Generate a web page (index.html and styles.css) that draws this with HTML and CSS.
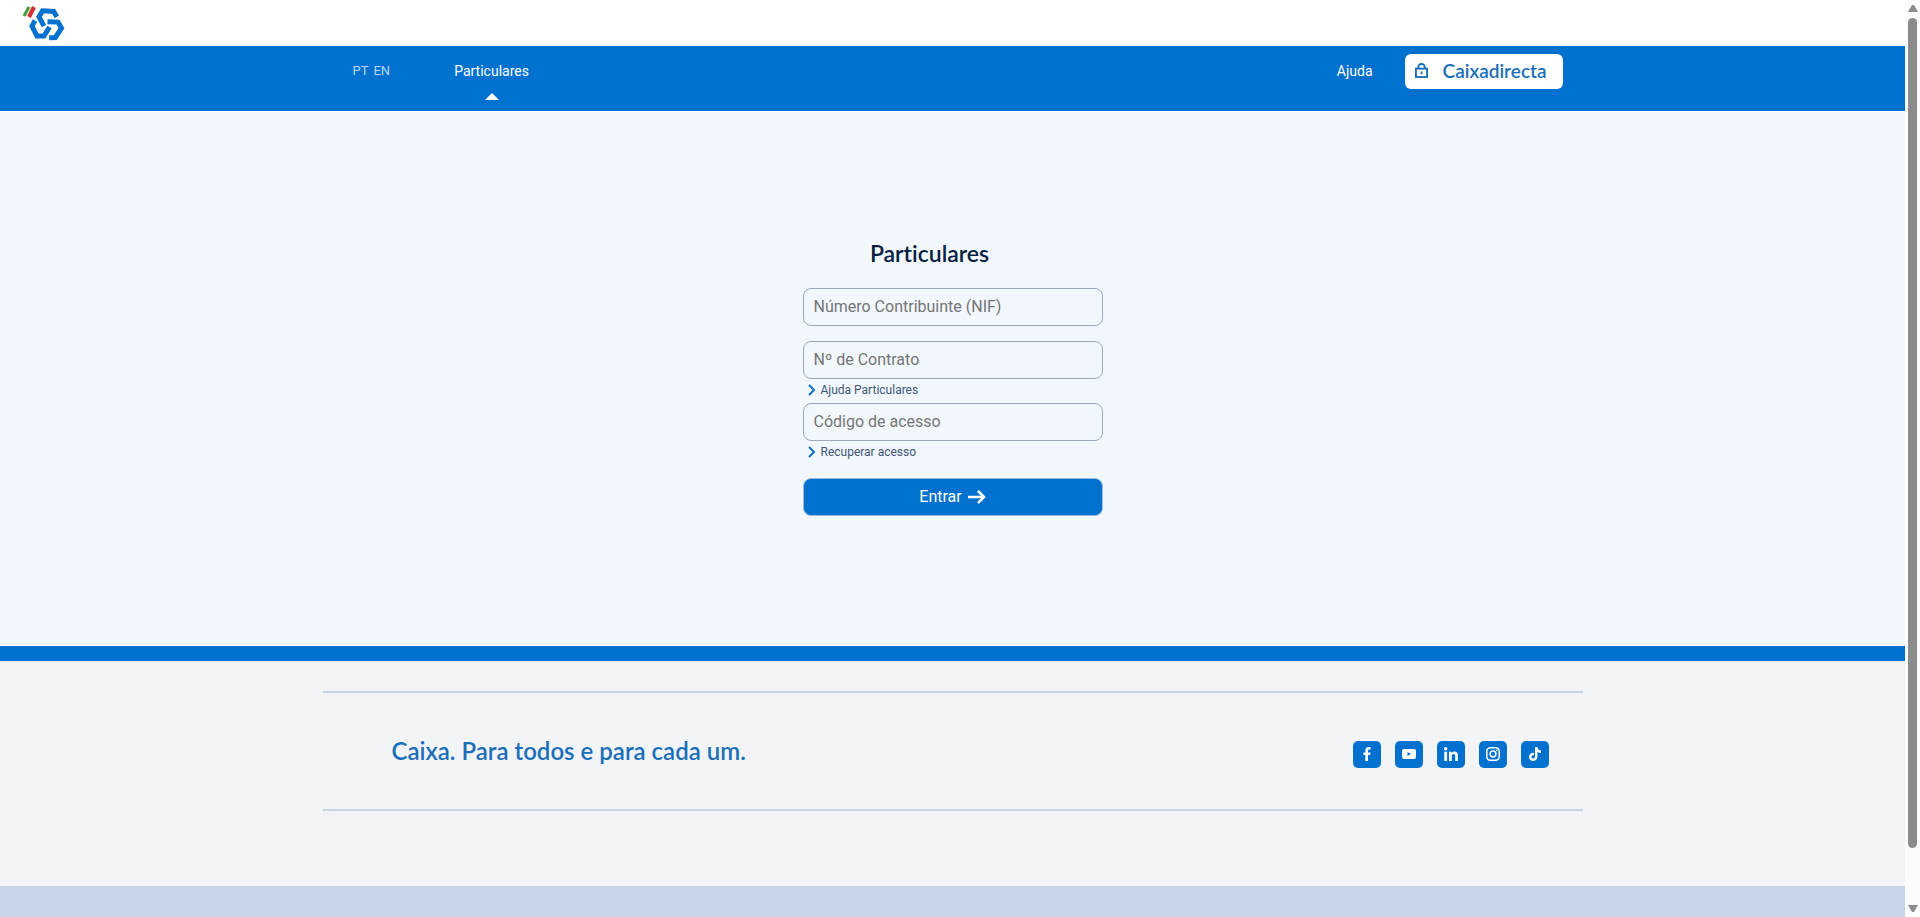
FILE: index.html
```html
<!DOCTYPE html>
<html lang="pt">
<head>
  <meta charset="UTF-8" />
  <meta name="viewport" content="width=device-width, initial-scale=1.0"/>
  <title>Caixadirecta - Particulares</title>
  <link rel="stylesheet" href="styles.css">
</head>
<body>

  <div class="page">
    <header class="header">
      <a href="#" class="logo" aria-label="Caixa">
        <svg width="44" height="38" viewBox="0 0 44 38">
          <path d="M7 3 L2 12" stroke="#3f9b3f" stroke-width="3"/>
          <path d="M9 3 L4 12" stroke="#c9d8a0" stroke-width="1"/>
          <path d="M12 3 L7 13" stroke="#d5303a" stroke-width="4"/>
          <g transform="translate(25 21)" fill="none" stroke="#0071ce" stroke-width="5">
            <path d="M-12 -4.500 L-15 1 L-10 11 H-3 L2.500 2"/>
            <path transform="rotate(120)" d="M-12 -4.500 L-15 1 L-10 11 H-3 L2.500 2"/>
            <path transform="rotate(240)" d="M-12 -4.500 L-15 1 L-10 11 H-3 L2.500 2"/>
          </g>
        </svg>
      </a>
    </header>

    <nav class="nav">
      <div class="container nav-row">
        <div class="langs">
          <a href="#">PT</a>
          <a href="#">EN</a>
        </div>
        <a href="#" class="nav-link active">Particulares</a>
        <a href="#" class="nav-link help">Ajuda</a>
        <button type="button" class="direct">
          <svg width="13" height="15" viewBox="0 0 14 16" fill="none" stroke="#1b6fb8" stroke-width="2">
            <rect x="1" y="6" width="12" height="9"/>
            <path d="M3.500 6 V4.500 A3.500 3.500 0 0 1 10.500 4.500 V6"/>
            <path d="M7 9 V12"/>
          </svg>
          Caixadirecta
        </button>
      </div>
    </nav>

    <main class="main">
      <form class="login">
        <h1>Particulares</h1>
        <input type="text" class="field nif" placeholder="Número Contribuinte (NIF)" aria-label="Número Contribuinte (NIF)">
        <input type="text" class="field" placeholder="Nº de Contrato" aria-label="Nº de Contrato">
        <a href="#" class="hint">
          <svg width="8" height="12" viewBox="0 0 8 12"><path d="M1 1 L6 6 L1 11" fill="none" stroke="#0f70bd" stroke-width="2"/></svg>
          Ajuda Particulares
        </a>
        <input type="password" class="field" placeholder="Código de acesso" aria-label="Código de acesso">
        <a href="#" class="hint">
          <svg width="8" height="12" viewBox="0 0 8 12"><path d="M1 1 L6 6 L1 11" fill="none" stroke="#0f70bd" stroke-width="2"/></svg>
          Recuperar acesso
        </a>
        <button type="submit" class="enter">
          Entrar
          <svg width="18" height="14" viewBox="0 0 18 14" fill="none" stroke="#fff" stroke-width="2.500"><path d="M0 7 H16"/><path d="M10 1 L16 7 L10 13"/></svg>
        </button>
      </form>
    </main>

    <footer class="footer">
      <div class="container claim-row">
        <p class="claim">Caixa. Para todos e para cada um.</p>
        <div class="social">
          <a href="#" aria-label="Facebook">
            <svg viewBox="0 0 14 14"><path d="M5.300 14 V8 H3.400 V5.400 H5.300 V3.700 C5.300 1.300 6.500 0 8.700 0 H10.600 V2.500 H9.300 C8.300 2.500 8 2.900 8 3.700 V5.400 H10.500 L10.200 8 H8 V14 Z"/></svg>
          </a>
          <a href="#" aria-label="YouTube">
            <svg viewBox="0 0 14 14"><path fill-rule="evenodd" d="M2 2 H12 Q14 2 14 4 V10 Q14 12 12 12 H2 Q0 12 0 10 V4 Q0 2 2 2 Z M5.500 5 V9 L9 7 Z"/></svg>
          </a>
          <a href="#" aria-label="LinkedIn">
            <svg viewBox="0 0 14 14"><circle cx="1.700" cy="1.700" r="1.700"/><path d="M0.300 4.700 H3.100 V14 H0.300 Z M5 4.700 H7.600 V6 C8.200 5 9.200 4.500 10.400 4.500 C13.100 4.500 14 6.200 14 8.800 V14 H11.200 V9.300 C11.200 8 11 6.900 9.600 6.900 C8.200 6.900 7.800 8 7.800 9.300 V14 H5 Z"/></svg>
          </a>
          <a href="#" aria-label="Instagram">
            <svg viewBox="0 0 14 14"><g fill="none" stroke="#fff" stroke-width="1.500"><rect x="0.800" y="0.800" width="12.400" height="12.400" rx="3.500"/><circle cx="7" cy="7" r="2.900"/></g><circle cx="10.700" cy="3.300" r="0.900"/></svg>
          </a>
          <a href="#" aria-label="TikTok">
            <svg viewBox="0 0 14 14"><path d="M7 0 H9.400 C9.600 2.100 10.900 3.300 13 3.500 V6 C11.600 6 10.400 5.600 9.400 4.900 V9.500 C9.400 12.400 7.400 14 5.100 14 C2.700 14 1 12.200 1 9.800 C1 7.200 3.100 5.400 6 5.700 V8.300 C4.600 8 3.500 8.600 3.500 9.800 C3.500 10.800 4.200 11.500 5.200 11.500 C6.300 11.500 7 10.700 7 9.500 Z"/></svg>
          </a>
        </div>
      </div>
    </footer>
    <div class="bottom"></div>
  </div>

  <!-- barra de deslocamento -->
  <div class="scrollbar" aria-hidden="true">
    <svg width="10" height="8" viewBox="0 0 10 8"><path d="M4 0 H6 L10 7 H0 Z"/></svg>
    <div class="thumb"></div>
    <svg width="10" height="8" viewBox="0 0 10 8"><path d="M4 8 H6 L10 1 H0 Z"/></svg>
  </div>

</body>
</html>
```
FILE: styles.css
```css
* {
  box-sizing: border-box;
}
body {
  display: grid;
  grid-template-columns: minmax(0, 1fr) 15px;
  height: 100vh;
  margin: 0;
  overflow: hidden;
  font-family: Roboto, sans-serif;
  font-size: 14px;
  background-color: #fff;
}
a {
  color: inherit;
  text-decoration: none;
}
button {
  border: 0;
  cursor: pointer;
}
.page {
  display: flex;
  flex-direction: column;
}
.container {
  width: 100%;
  max-width: 1260px;
  margin: 0 auto;
}

/* cabeçalho */
.header {
  height: 46px;
  padding: 4px 22px;
}
.logo svg {
  display: block;
}
.nav {
  height: 65px;
  background-color: #0071ce;
  color: #fff;
}
.nav-row {
  display: flex;
  align-items: flex-start;
  padding: 8px 20px 0 30px;
}
.langs {
  display: flex;
  gap: 5px;
  margin-right: 64px;
  font-size: 13px;
  line-height: 34px;
  color: #b5d9f5;
}
.nav-link {
  line-height: 34px;
}
.active::after {
  content: "";
  display: block;
  width: 0;
  margin: 5px auto 0;
  border: 7px solid transparent;
  border-top: 0;
  border-bottom-color: #fff;
}
.help {
  margin-left: auto;
  margin-right: 32px;
}
.direct {
  display: flex;
  align-items: center;
  gap: 15px;
  height: 35px;
  padding: 0 16px 2px 10px;
  border-radius: 6px;
  background-color: #fff;
  color: #1b6fb8;
  font: 600 19px Lato, sans-serif;
}

/* formulário */
.main {
  height: 535px;
  padding-top: 128px;
  background-color: #f3f8ff;
}
.login {
  display: flex;
  flex-direction: column;
  width: 300px;
  margin: 0 auto;
}
.login h1 {
  margin: 0 0 21px;
  padding-right: 46px;
  font: 600 23px/28px Lato, sans-serif;
  font-variant-ligatures: none;
  text-align: center;
  color: #04213f;
}
.field {
  width: 100%;
  height: 38px;
  padding: 0 10px 2px;
  border: 1px solid #9ba8bd;
  border-radius: 8px;
  background-color: transparent;
  font: 16px Roboto, sans-serif;
}
.field::placeholder {
  color: #757575;
}
.nif {
  margin-bottom: 15px;
}
.hint {
  display: flex;
  align-items: center;
  gap: 5px;
  height: 24px;
  padding: 0 0 2px 5px;
  font-size: 12px;
  color: #3f5674;
}
.enter {
  display: flex;
  align-items: center;
  justify-content: center;
  gap: 6px;
  height: 38px;
  margin-top: 13px;
  padding-bottom: 2px;
  border: 1px solid #9bbbe0;
  border-radius: 8px;
  background-color: #0071ce;
  color: #fff;
  font: 16px Roboto, sans-serif;
}

/* rodapé */
.footer {
  height: 240px;
  padding-top: 30px;
  border-top: 15px solid #0071ce;
  background-color: #f2f4f8;
}
.claim-row {
  display: flex;
  align-items: center;
  justify-content: space-between;
  height: 120px;
  padding: 0 34px 0 69px;
  border: solid #c9d3e6;
  border-width: 2px 0;
}
.claim {
  margin: 0;
  font: 600 24px/28px Lato, sans-serif;
  color: #1b6fb8;
}
.social {
  display: flex;
  gap: 14px;
  margin-top: 6px;
}
.social a {
  display: flex;
  align-items: center;
  justify-content: center;
  width: 28px;
  height: 27px;
  border-radius: 5px;
  background-color: #0071ce;
}
.social svg {
  width: 14px;
  height: 14px;
  fill: #fff;
}
.bottom {
  flex: 1;
  background-color: #c9d5e8;
}

.scrollbar {
  display: flex;
  flex-direction: column;
  align-items: center;
  padding: 5px 0;
  background-color: #fcfcfc;
}
.scrollbar svg {
  fill: #8b8b8b;
}
.thumb {
  width: 9px;
  height: calc(100% - 77px);
  margin: 5px 0 auto;
  border-radius: 5px;
  background-color: #8b8b8b;
}
```
